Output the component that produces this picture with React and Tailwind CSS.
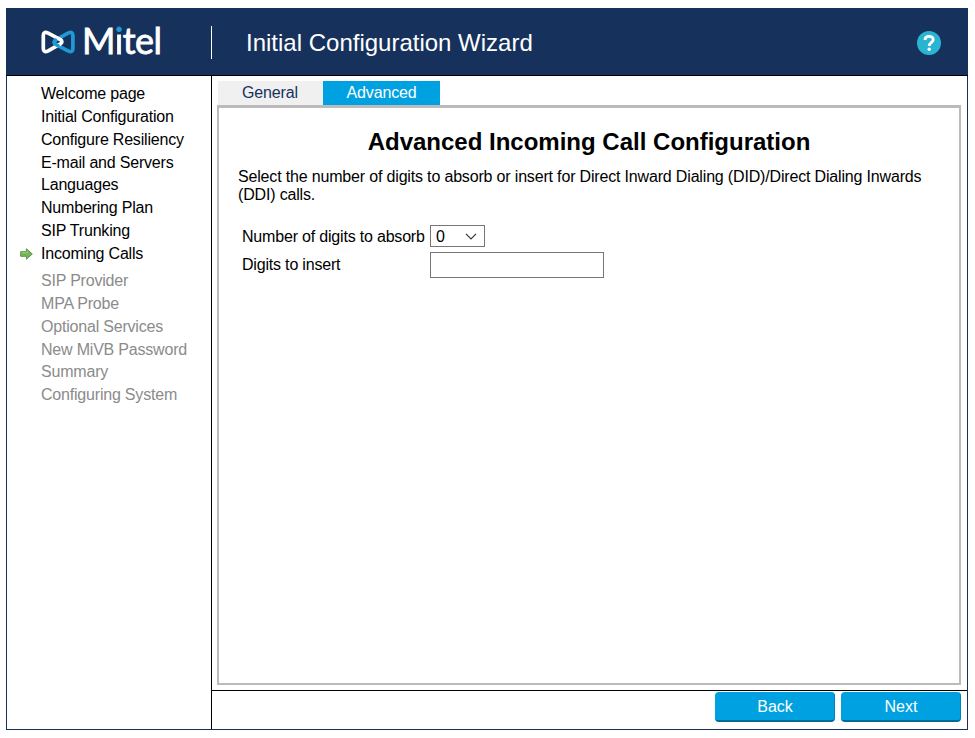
import React from 'react';

const done = [
  'Welcome page',
  'Initial Configuration',
  'Configure Resiliency',
  'E-mail and Servers',
  'Languages',
  'Numbering Plan',
  'SIP Trunking',
  'Incoming Calls',
];

const pending = [
  'SIP Provider',
  'MPA Probe',
  'Optional Services',
  'New MiVB Password',
  'Summary',
  'Configuring System',
];

function LogoMark() {
  return (
    <svg width="34" height="24" viewBox="0 0 34 24" fill="none" strokeWidth="3.7" strokeLinejoin="round" strokeLinecap="round">
      <path d="M14.5 10.2 L27 3.2 Q31.9 .8 31.9 5.5 V18.5 Q31.9 23.2 27 20.8 L15 14.6 Q11.8 12.5 14.5 10.2 Z" stroke="#1e9bd7" />
      <path d="M18 14.6 L7.2 20.8 Q2.3 23.2 2.3 18.5 V5.5 Q2.3 .8 7.2 3.2 L19.4 9.6 Q22.4 11.8 19.4 13.8 Z" stroke="#fff" />
      <path d="M14.5 10.2 Q11.8 12.5 15 14.6 L17 15.6" stroke="#1e9bd7" />
    </svg>
  );
}

function Arrow() {
  return (
    <svg className="absolute left-[13px] top-[6px]" width="13" height="12" viewBox="0 0 13 12">
      <path d="M.7 3.7H6.4V.8L12.3 6 6.4 11.2V8.3H.7Z" fill="#74b556" stroke="#5a9647" strokeWidth="1" strokeLinejoin="round" />
      <path d="M1.6 4.8H7.4V3" fill="none" stroke="#9bce80" strokeWidth=".9" />
    </svg>
  );
}

function HelpIcon() {
  return (
    <svg width="24" height="24" viewBox="0 0 24 24" fill="none">
      <circle cx="12" cy="12" r="12" fill="#29b5d2" />
      <path d="M8 8.9C8 6.5 9.6 5.3 12 5.3S16.2 6.6 16.2 8.7C16.2 11.4 12.2 11.3 12.2 15" stroke="#fff" strokeWidth="2.8" />
      <circle cx="12.2" cy="18.3" r="1.7" fill="#fff" />
    </svg>
  );
}

function Step({ label, active }) {
  return (
    <li className="relative h-[22.86px] pl-[34px] leading-[23px] tracking-[-0.2px] whitespace-nowrap">
      {active && <Arrow />}
      {label}
    </li>
  );
}

export default function App() {
  return (
    <div className="h-[738px] w-[975px] bg-white pl-[6px] pt-2 font-['Liberation_Sans',Arial,sans-serif] text-base text-black">
      <div className="flex h-[722px] w-[962px] flex-col border border-[#16325c]">
        <header className="-mx-px -mt-px flex h-[68px] shrink-0 items-center border-b border-black bg-[#16325c]">
          <div className="flex w-[205px] items-center pl-[35px]">
            <LogoMark />
            <div className="-mt-1 ml-[7px] whitespace-nowrap font-['Lato',sans-serif] text-[36px] leading-[34px] tracking-[-0.5px] text-white [-webkit-text-stroke:0.8px_white]">
              M<span className="bg-[linear-gradient(#1e9bd7_15.5px,#fff_15.5px)] bg-clip-text text-transparent [-webkit-text-stroke:0.8px_transparent]">i</span>tel
            </div>
          </div>
          <div className="mt-[2px] h-[33px] w-px bg-white" />
          <h1 className="ml-[34px] mt-[2px] flex-1 text-2xl leading-7 text-white">Initial Configuration Wizard</h1>
          <div className="mr-[27px] mt-[3px]"><HelpIcon /></div>
        </header>
        <div className="flex min-h-0 flex-1">
          <nav className="w-[205px] shrink-0 border-r border-black pt-[6px]">
            <ul>{done.map((s, i) => <Step key={s} label={s} active={i === 7} />)}</ul>
            <ul className="mt-[4.1px] text-[#8b8b8b]">{pending.map((s) => <Step key={s} label={s} />)}</ul>
          </nav>
          <main className="flex flex-1 flex-col">
            <div className="flex flex-1 flex-col border-b border-black pb-[5px] pl-[5px] pr-[6px] pt-[5px]">
              <div className="flex h-6 pl-px leading-6 tracking-[-0.15px]">
                <div className="w-[105px] bg-[#f0f0f0] pr-px text-center text-[#16325c]">General</div>
                <div className="w-[117px] bg-[#00a1e0] text-center text-white">Advanced</div>
              </div>
              <section className="flex-1 border-2 border-t-[3px] border-[#bbb] px-[19px] pt-5">
                <h2 className="text-center text-2xl font-bold leading-7">Advanced Incoming Call Configuration</h2>
                <p className="mt-[12px] whitespace-nowrap leading-[18px] tracking-[-0.17px]">
                  Select the number of digits to absorb or insert for Direct Inward Dialing (DID)/Direct Dialing Inwards<br />(DDI) calls.
                </p>
                <div className="mt-[21px] grid grid-cols-[188px_174px] pl-1 tracking-[-0.19px]">
                  <label className="h-[27px] whitespace-nowrap leading-6">Number of digits to absorb</label>
                  <div className="flex h-[22px] w-[55px] items-center justify-between border border-[#767676] pl-[5px] pr-[7px]">
                    <span className="pt-px">0</span>
                    <svg width="12" height="7" viewBox="0 0 12 7" fill="none"><path d="M1 .8 6 5.8 11 .8" stroke="#333" strokeWidth="1.2" /></svg>
                  </div>
                  <label className="leading-[26px]">Digits to insert</label>
                  <input className="h-[26px] w-[174px] border border-[#767676] bg-white" />
                </div>
              </section>
            </div>
            <footer className="flex h-[38px] shrink-0 justify-end gap-[6px] pr-[6px] pt-px">
              <button className="h-[30px] w-[120px] rounded-[4px] border-b-2 border-r border-b-[#006b99] border-r-[#0080b5] bg-[#00a1e0] pl-px pt-px leading-7 text-white">Back</button>
              <button className="h-[30px] w-[120px] rounded-[4px] border-b-2 border-r border-b-[#006b99] border-r-[#0080b5] bg-[#00a1e0] pl-px pt-px leading-7 text-white">Next</button>
            </footer>
          </main>
        </div>
      </div>
    </div>
  );
}
